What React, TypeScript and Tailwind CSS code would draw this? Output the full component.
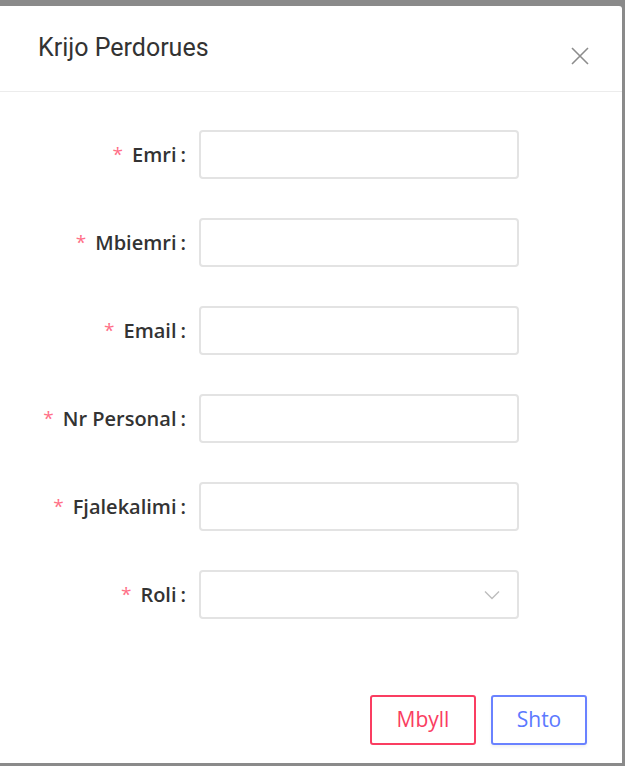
const fields = ['Emri', 'Mbiemri', 'Email', 'Nr Personal', 'Fjalekalimi']

export default function App() {
  return (
    <div className="h-[766px] w-[625px] overflow-hidden bg-[#8a8a8a] pt-[6px]">
      <div className="flex h-[757px] w-[622px] flex-col rounded-tr-[3px] bg-white">
        <div className="flex h-[86px] items-start justify-between border-b border-[#ececec] pl-[38px] pr-[32px]">
          <h2 className="mt-[27px] text-[25px] leading-[30px] text-[#333]" style={{ fontFamily: 'Roboto, sans-serif' }}>
            Krijo Perdorues
          </h2>
          <button type="button" className="mt-[40px] text-[#8c8c8c]">
            <svg width="20" height="20" viewBox="0 0 20 20" fill="none">
              <path d="M2 2l16 16M18 2L2 18" stroke="currentColor" strokeWidth="1.6" />
            </svg>
          </button>
        </div>

        <form className="flex flex-col gap-[39px] pt-[38px]" style={{ fontFamily: '"Open Sans", sans-serif' }}>
          {fields.map(f => (
            <Row key={f} label={f}>
              <input className="h-[49px] w-[320px] rounded-[4px] border-2 border-[#e3e3e3] px-3 outline-none" />
            </Row>
          ))}
          <Row label="Roli">
            <div className="flex h-[49px] w-[320px] items-center justify-end rounded-[4px] border-2 border-[#e3e3e3] pr-[17px] text-[#bdbdbd]">
              <svg width="16" height="10" viewBox="0 0 16 10" fill="none">
                <path d="M1 1.5l7 7 7-7" stroke="currentColor" strokeWidth="1.4" />
              </svg>
            </div>
          </Row>
        </form>

        <div className="mt-auto mb-[18px] flex justify-end gap-[15px] pr-[35px]" style={{ fontFamily: '"Open Sans", sans-serif' }}>
          <button type="button" className="h-[50px] w-[106px] rounded-[3px] border-2 border-[#fa3d61] text-[21px] text-[#fa3d61]">
            Mbyll
          </button>
          <button type="button" className="h-[50px] w-[96px] rounded-[3px] border-2 border-[#6a82ff] text-[21px] text-[#5c79ff] shadow-[0_2px_3px_rgba(0,0,0,0.06)]">
            Shto
          </button>
        </div>
      </div>
    </div>
  )
}

function Row({ label, children }: { label: string; children: React.ReactNode }) {
  return (
    <div className="flex items-center">
      <label className="flex w-[199px] items-center justify-end pr-[13px] text-[20px] font-semibold text-[#333]">
        <span className="mr-[9px] text-[19px] font-normal text-[#ff6f87]">*</span>
        {label}
        <span className="ml-[4px]">:</span>
      </label>
      {children}
    </div>
  )
}
